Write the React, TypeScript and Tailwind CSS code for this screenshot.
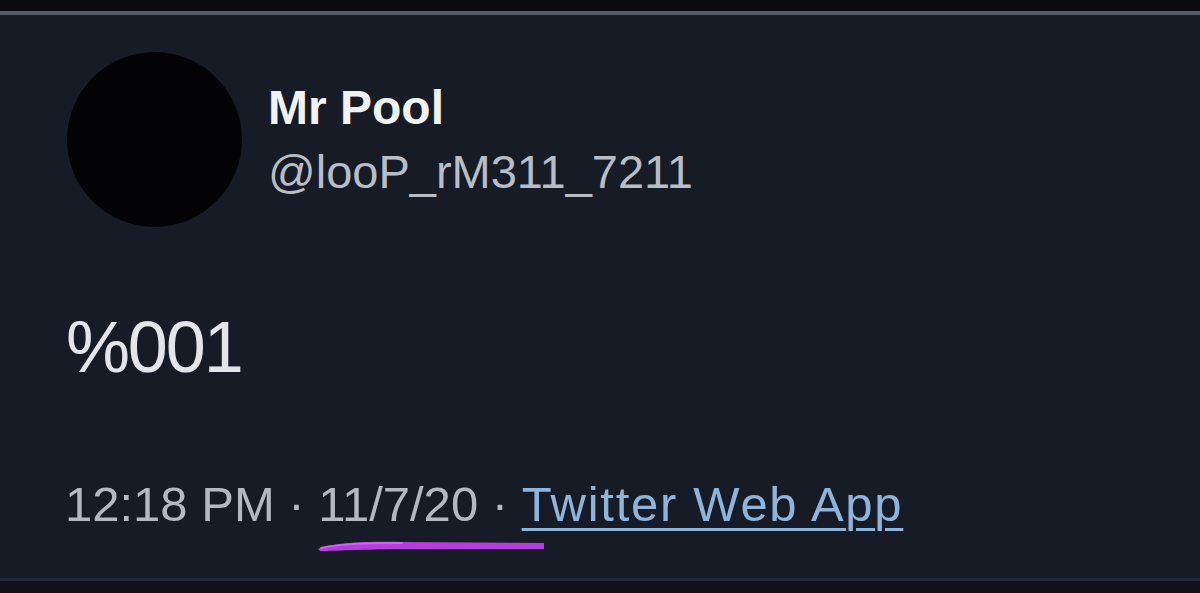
import React from "react";

function Avatar() {
  return <div className="w-[175px] h-[175px] shrink-0 rounded-full bg-[#030305]" />;
}

function Highlight() {
  // hand-drawn marker stroke under the date
  return (
    <svg width="232" height="12" viewBox="0 0 232 12" className="ml-[314px] mt-[11px] block">
      <path d="M4 9 C 18 2, 60 1, 90 2 L 230 3 L 230 9 L 90 9 C 60 9, 22 11, 6 11 Z" fill="#b43edd" />
      <path d="M7 8 C 30 3, 60 3, 88 3" stroke="#c86aea" strokeWidth="2" fill="none" strokeLinecap="round" />
    </svg>
  );
}

export default function App() {
  return (
    <div
      className="w-[1200px] h-[593px] flex flex-col bg-[#0c0b11] overflow-hidden"
      style={{ fontFamily: '"Liberation Sans", Arial, sans-serif' }}
    >
      <div className="h-[11px] shrink-0 bg-[#0b0a0f]" />
      <div className="flex-1 flex flex-col bg-[#161b26] border-t-[4px] border-t-[#585b69] border-b-[3px] border-b-[#252a3b] pt-[37px]">
        {/* Header */}
        <div className="flex items-start pl-[67px]">
          <Avatar />
          <div className="ml-[26px] pt-[32px] flex flex-col">
            <p className="text-[48px] leading-none font-bold text-[#f1f2f5]">Mr Pool</p>
            <p className="mt-[16px] text-[47px] leading-none text-[#b9bdc7]">@looP_rM311_7211</p>
          </div>
        </div>

        {/* Body */}
        <p className="mt-[84px] pl-[66px] text-[72px] leading-none text-[#e3e5ea] tracking-[-0.03em]">%001</p>

        {/* Footer */}
        <div className="mt-[97px] pl-[65px] text-[49px] leading-none text-[#b4b8c1] whitespace-nowrap">
          <span>12:18 PM · 11/7/20 · </span>
          <span className="text-[#8db5db] tracking-[0.035em] underline decoration-[3px] underline-offset-[7px]">
            Twitter Web App
          </span>
        </div>
        <Highlight />
      </div>
      <div className="h-[12px] shrink-0 bg-[#110f19]" />
    </div>
  );
}
